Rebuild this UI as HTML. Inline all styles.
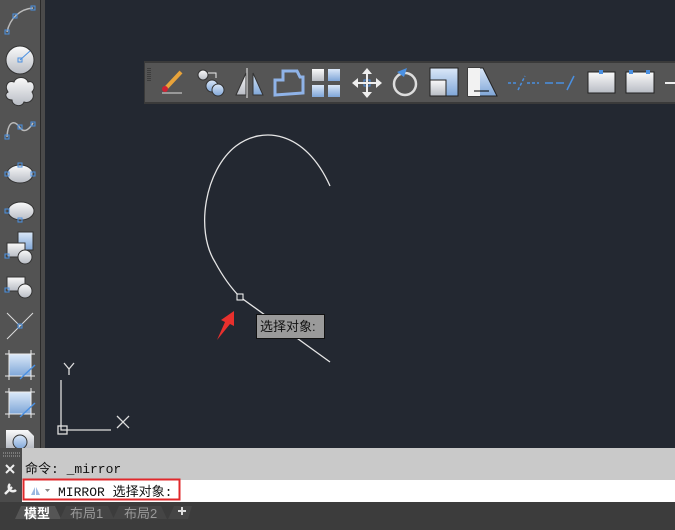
<!DOCTYPE html>
<html><head><meta charset="utf-8"><style>
body{margin:0;width:675px;height:530px;overflow:hidden;background:#232831;font-family:"Liberation Sans","Noto Sans CJK SC",sans-serif;position:relative}
.abs{position:absolute}
</style></head><body>
<svg class="abs" style="left:0;top:0" width="675" height="530">
<defs>
<linearGradient id="g" x1="0" y1="0" x2="0" y2="1"><stop offset="0" stop-color="#fafafa"/><stop offset="1" stop-color="#b8bcc4"/></linearGradient>
<linearGradient id="b" x1="0" y1="0" x2="0" y2="1"><stop offset="0" stop-color="#dbe8f8"/><stop offset="1" stop-color="#7fa6d8"/></linearGradient>
</defs>
<rect x="0" y="0" width="40" height="448" fill="#535353"/>
<rect x="40" y="0" width="1" height="448" fill="#2a2a2a"/>
<rect x="41" y="0" width="4" height="448" fill="#4a4a4a"/>
<path d="M7,32 C10,18 20,9 33,8" stroke="#bbb" stroke-width="1.5" fill="none"/>
<rect x="5" y="30" width="4" height="4" fill="none" stroke="#4a90e2"/><rect x="13" y="14" width="4" height="4" fill="none" stroke="#4a90e2"/><rect x="31" y="6" width="4" height="4" fill="none" stroke="#4a90e2"/>
<circle cx="20" cy="60" r="14" fill="url(#g)" stroke="#333"/><line x1="20" y1="60" x2="30" y2="51" stroke="#4a90e2"/><rect x="18" y="58" width="4" height="4" fill="none" stroke="#4a90e2"/>
<path d="M8,92 c-4,-6 0,-12 6,-10 c2,-6 12,-6 14,0 c6,-2 8,6 4,10 c4,6 -2,12 -8,10 c-2,6 -12,4 -12,-2 c-6,0 -8,-6 -4,-8z" fill="url(#g)" stroke="#333"/>
<path d="M7,137 C8,120 15,120 20,128 C25,134 30,128 33,123" stroke="#bbb" stroke-width="1.5" fill="none"/>
<rect x="5" y="135" width="4" height="4" fill="none" stroke="#4a90e2"/><rect x="18" y="125" width="4" height="4" fill="none" stroke="#4a90e2"/><rect x="31" y="122" width="4" height="4" fill="none" stroke="#4a90e2"/>
<ellipse cx="20" cy="174" rx="13" ry="9" fill="url(#g)" stroke="#333"/><rect x="18" y="163" width="4" height="4" fill="none" stroke="#4a90e2"/><rect x="5" y="172" width="4" height="4" fill="none" stroke="#4a90e2"/><rect x="31" y="172" width="4" height="4" fill="none" stroke="#4a90e2"/>
<ellipse cx="21" cy="211" rx="13" ry="9" fill="url(#g)" stroke="#333"/><rect x="5" y="209" width="4" height="4" fill="none" stroke="#4a90e2"/><rect x="18" y="218" width="4" height="4" fill="none" stroke="#4a90e2"/>
<rect x="18" y="232" width="15" height="18" fill="url(#b)" stroke="#333"/>
<rect x="7" y="243" width="18" height="14" fill="url(#g)" stroke="#333"/><circle cx="25" cy="257" r="7" fill="url(#g)" stroke="#333"/><rect x="5" y="254" width="4" height="4" fill="none" stroke="#4a90e2"/>
<rect x="7" y="277" width="18" height="14" fill="url(#g)" stroke="#333"/><circle cx="25" cy="291" r="7" fill="url(#g)" stroke="#333"/><rect x="5" y="288" width="4" height="4" fill="none" stroke="#4a90e2"/>
<line x1="7" y1="339" x2="33" y2="313" stroke="#ddd"/><line x1="7" y1="313" x2="20" y2="326" stroke="#ddd"/><rect x="18" y="324" width="4" height="4" fill="none" stroke="#4a90e2"/>
<rect x="9" y="354" width="22" height="22" fill="url(#b)" stroke="#333"/><path d="M5,354h30M5,376h30M9,350v30M31,350v30" stroke="#eee"/><line x1="20" y1="379" x2="35" y2="365" stroke="#4a90e2" stroke-width="1.5"/>
<rect x="9" y="392" width="22" height="22" fill="url(#b)" stroke="#333"/><path d="M5,392h30M5,414h30M9,388v30M31,388v30" stroke="#eee"/><line x1="20" y1="417" x2="35" y2="403" stroke="#4a90e2" stroke-width="1.5"/>
<path d="M6,430h22l6,6v12h-28z" fill="url(#g)"/><circle cx="20" cy="442" r="7" fill="url(#b)" stroke="#333"/>
<rect x="144" y="61" width="531" height="43" fill="#3a3a3a"/>
<rect x="145" y="63" width="530" height="39" fill="#555"/>
<path d="M148,68v14M150,68v14" stroke="#222" stroke-dasharray="1,1"/>
<line x1="162" y1="93" x2="182" y2="93" stroke="#ddd"/><line x1="166" y1="88" x2="181" y2="72" stroke="#e8a33a" stroke-width="4"/><circle cx="165" cy="89" r="3" fill="#c23"/>
<circle cx="203" cy="75" r="5" fill="url(#g)" stroke="#333"/><circle cx="212" cy="86" r="6" fill="url(#b)" stroke="#333"/><circle cx="218" cy="90" r="6" fill="url(#b)" stroke="#333"/><path d="M208,73h8v5" stroke="#eee" fill="none"/>
<path d="M236,95l10,-22v22z" fill="url(#g)" stroke="#333"/><path d="M253,95l-0,-22l10,22z" fill="url(#b)" stroke="#333"/><line x1="247" y1="68" x2="247" y2="98" stroke="#eee"/>
<path d="M275,95v-15h8v-9h14l3,6h3v16z" fill="none" stroke="#8fb3e8" stroke-width="3"/>
<rect x="312" y="69" width="12" height="12" fill="url(#g)"/><rect x="328" y="69" width="12" height="12" fill="url(#b)"/><rect x="312" y="85" width="12" height="12" fill="url(#b)"/><rect x="328" y="85" width="12" height="12" fill="url(#b)"/>
<path d="M367,68l5,6h-10zM367,98l5,-6h-10zM352,83l6,-5v10zM382,83l-6,-5v10z" fill="#eee"/><rect x="364" y="80" width="6" height="6" fill="none" stroke="#4a90e2"/><path d="M358,83h18M367,74v18" stroke="#eee" stroke-width="2"/>
<circle cx="405" cy="84" r="11" fill="none" stroke="#ddd" stroke-width="2.5"/><path d="M397,72l10,-4l-3,9z" fill="#4a90e2"/>
<rect x="430" y="68" width="28" height="28" fill="url(#b)" stroke="#222"/><rect x="430" y="80" width="16" height="16" fill="url(#g)" stroke="#222"/>
<path d="M468,68h15l14,28h-29z" fill="url(#b)" stroke="#222"/><rect x="468" y="68" width="12" height="28" fill="#f2f2f2"/><path d="M474,91h15" stroke="#000"/>
<path d="M508,83h8M527,83h12M518,90l7,-14" stroke="#4a90e2" stroke-width="1.5" stroke-dasharray="3,2"/>
<path d="M545,83h8M556,83h8M567,90l7,-14" stroke="#4a90e2" stroke-width="1.5"/>
<rect x="588" y="72" width="27" height="21" fill="url(#g)" stroke="#222"/><rect x="599" y="70" width="4" height="4" fill="#4a90e2"/>
<rect x="626" y="72" width="28" height="21" fill="url(#g)" stroke="#222"/><rect x="629" y="70" width="4" height="4" fill="#4a90e2"/><rect x="646" y="70" width="4" height="4" fill="#4a90e2"/>
<path d="M665,83h10" stroke="#eee" stroke-width="2"/>
<path d="M330,186 C305,130 262,126 236,146 C205,170 195,230 215,262 C222,275 230,287 240,297 L330,362" stroke="#e6e6e6" stroke-width="1.3" fill="none"/>
<rect x="237" y="294" width="6" height="6" fill="#232831" stroke="#fff"/>
<path d="M217,340l8,-18l-4,-2l13,-9l0,15l-4,-2z" fill="#e8302d"/>
<rect x="256.5" y="314.5" width="68" height="24" fill="#9a9a9a" stroke="#111"/>
<text x="260" y="331" font-size="13" fill="#111" font-family="Liberation Sans,Noto Sans CJK SC,sans-serif">选择对象:</text>
<path d="M61,380v50h50" stroke="#ddd" stroke-width="1.3" fill="none"/><rect x="58" y="426" width="9" height="8" fill="none" stroke="#ddd" stroke-width="1.3"/>
<path d="M64,363l5,6l5,-6M69,369v6M117,416l12,12M129,416l-12,12" stroke="#ddd" stroke-width="1.3" fill="none"/>
<rect x="0" y="448" width="675" height="82" fill="#3c3c3c"/>
<rect x="0" y="448" width="22" height="54" fill="#4b4b4b"/>
<path d="M3,453h17M3,456h17" stroke="#aaa" stroke-dasharray="1,1"/>
<path d="M6,465l8,8M14,465l-8,8" stroke="#eee" stroke-width="2"/>
<path d="M5,494l7,-7M10,484a3,3 0 1 0 6,6" stroke="#eee" stroke-width="2.5" fill="none"/>
<rect x="22" y="448" width="653" height="32" fill="#c9c9c9"/>
<rect x="22" y="480" width="653" height="22" fill="#fff"/>
<rect x="23.5" y="479.5" width="156" height="20" fill="none" stroke="#e0282b" stroke-width="2"/>
<path d="M31,495l4,-8v8zM36,495v-8l4,8z" fill="#9bb8e0"/><path d="M45,489h5l-2.5,3z" fill="#888"/>
<path d="M15,519l6,-13h34l6,13z" fill="#555"/>
<path d="M60,519l6,-13h42l6,13z" fill="#454545"/><path d="M113,519l6,-13h42l6,13z" fill="#454545"/><path d="M168,519l6,-13h18l-4,13z" fill="#454545"/>
<path d="M182,507v8M178,511h8" stroke="#ddd" stroke-width="2"/>
</svg>
<div class="abs" style="left:25px;top:458px;font-size:13px;font-family:'Liberation Mono','Noto Sans CJK SC',monospace;color:#111">命令: _mirror</div>
<div class="abs" style="left:58px;top:481px;font-size:13px;font-family:'Liberation Mono','Noto Sans CJK SC',monospace;color:#111">MIRROR 选择对象:</div>
<div class="abs" style="left:24px;top:503px;font-size:13px;color:#fff;font-weight:bold">模型</div>
<div class="abs" style="left:70px;top:503px;font-size:13px;color:#999">布局1</div>
<div class="abs" style="left:124px;top:503px;font-size:13px;color:#999">布局2</div>
</body></html>
